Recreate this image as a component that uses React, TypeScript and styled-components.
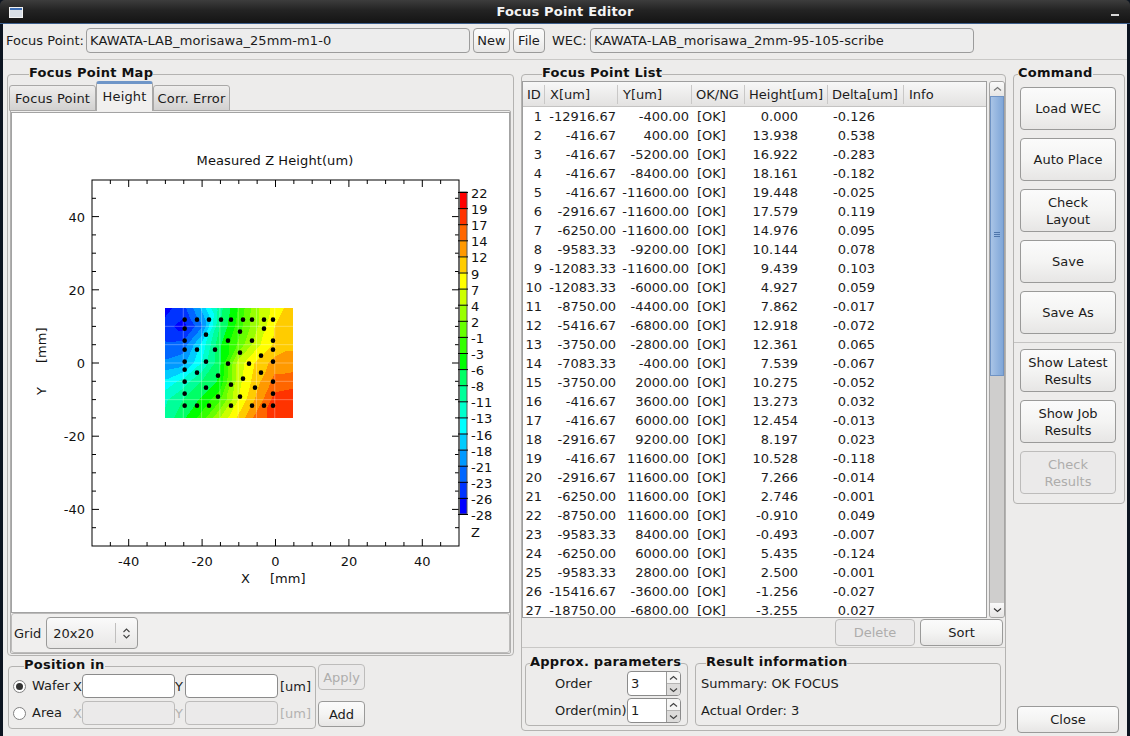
import styled, { createGlobalStyle } from "styled-components"

const GlobalStyle = createGlobalStyle`
  html, body {
    margin: 0;
    padding: 0;
    background: #10151c;
  }
  * {
    box-sizing: border-box;
  }
  body {
    font-family: "DejaVu Sans", "Liberation Sans", sans-serif;
    font-size: 13px;
    color: #1c1c1c;
  }
`

const Window = styled.div`
  width: 1130px;
  height: 736px;
  display: flex;
  flex-direction: column;
  overflow: hidden;
  background: #0c1420;
`

const TitleBar = styled.div`
  height: 24px;
  flex: none;
  position: relative;
  display: flex;
  align-items: center;
  justify-content: center;
  color: #f4f4f4;
  font-weight: bold;
  font-size: 13px;
  letter-spacing: 0.2px;
  border-radius: 5px 5px 0 0;
  background: linear-gradient(#3d3d3d, #232323 45%, #141414);
  border-bottom: 1px solid #3d5f8c;
`

const WindowIcon = styled.svg`
  position: absolute;
  left: 9px;
  top: 7px;
`

const MinimizeMark = styled.span`
  position: absolute;
  right: 11px;
  top: 14px;
  width: 8px;
  height: 2px;
  background: #d8d8d8;
`

const Body = styled.div`
  flex: 1;
  margin: 0 3px;
  background: #edeceb;
  display: flex;
  flex-direction: column;
  min-height: 0;
`

const TopRow = styled.div`
  height: 36px;
  flex: none;
  display: flex;
  align-items: center;
  padding: 0 0 2px 3px;
  border-bottom: 1px solid #c9c8c6;
`

const TopLabel = styled.span<{ $left?: number; $width: number }>`
  width: ${(p) => p.$width}px;
  margin-left: ${(p) => p.$left ?? 0}px;
  flex: none;
`

const PathField = styled.div`
  width: 384px;
  height: 25px;
  flex: none;
  display: flex;
  align-items: center;
  padding-left: 3px;
  letter-spacing: 0.1px;
  background: #ededed;
  border: 1px solid #9c9c9c;
  border-radius: 4px;
`

const Button = styled.div<{ $w?: number; $h?: number; $off?: boolean }>`
  width: ${(p) => (p.$w ? `${p.$w}px` : "100%")};
  height: ${(p) => p.$h ?? 43}px;
  flex: none;
  display: flex;
  align-items: center;
  justify-content: center;
  text-align: center;
  line-height: 17px;
  color: ${(p) => (p.$off ? "#aeadac" : "#1c1c1c")};
  background: ${(p) =>
    p.$off ? "#ebeaea" : "linear-gradient(#fbfbfb, #f4f4f3 50%, #e7e6e5)"};
  border: 1px solid ${(p) => (p.$off ? "#bdbcbb" : "#9a9a99")};
  border-radius: 4px;
`

const TopButton = styled(Button)`
  margin-left: 3px;
`

const Main = styled.div`
  flex: 1;
  min-height: 0;
  display: flex;
  padding: 6px 0 3px 4px;
`

const Column = styled.div<{ $w: number; $left?: number }>`
  width: ${(p) => p.$w}px;
  margin-left: ${(p) => p.$left ?? 0}px;
  flex: none;
  display: flex;
  flex-direction: column;
`

const Group = styled.fieldset<{ $h: number; $w?: number }>`
  margin: 0;
  padding: 0;
  min-width: 0;
  flex: none;
  width: ${(p) => (p.$w ? `${p.$w}px` : "100%")};
  height: ${(p) => p.$h}px;
  border: 1px solid #b4b3b1;
  border-radius: 4px;
`

const Legend = styled.legend<{ $left: number }>`
  margin-left: ${(p) => p.$left}px;
  padding: 0;
  height: 16px;
  line-height: 14px;
  font-weight: bold;
  font-size: 13px;
  letter-spacing: 0.25px;
  color: #111;
`

const TabStrip = styled.div`
  height: 30px;
  margin: -1px 0 0 1px;
  display: flex;
  align-items: flex-end;
  position: relative;
  z-index: 1;
`

const Tab = styled.div<{ $w: number; $active?: boolean }>`
  width: ${(p) => p.$w}px;
  height: ${(p) => (p.$active ? 30 : 26)}px;
  display: flex;
  align-items: center;
  justify-content: center;
  letter-spacing: 0.15px;
  padding-bottom: ${(p) => (p.$active ? 3 : 0)}px;
  background: ${(p) =>
    p.$active ? "#f1f0ef" : "linear-gradient(#efeeed, #d2d1d0)"};
  border: 1px solid #a9a8a7;
  border-bottom: ${(p) => (p.$active ? "none" : "1px solid #a9a8a7")};
  border-top: ${(p) => (p.$active ? "3px solid #6f96c8" : "1px solid #a9a8a7")};
  border-radius: 3px 3px 0 0;
`

const TabPane = styled.div`
  height: 544px;
  width: 501px;
  margin: -1px 0 0 2px;
  padding: 1px 0 0;
  border: 1px solid #b0afae;
  border-radius: 0 2px 2px 2px;
  display: flex;
  flex-direction: column;
  background: #f0efee;
`

const PlotFrame = styled.div`
  height: 501px;
  flex: none;
  background: #fff;
  border: 1px solid #a3a3a3;
`

const PlotSvg = styled.svg`
  display: block;
  font-family: "DejaVu Sans", sans-serif;
  font-size: 13px;
`

const GridBar = styled.div`
  height: 40px;
  flex: none;
  display: flex;
  align-items: center;
  padding-left: 2px;
  gap: 5px;
  border: 1px solid #bcbbba;
  border-radius: 3px;
`

const Combo = styled.div`
  width: 92px;
  height: 32px;
  display: flex;
  align-items: center;
  padding-left: 6px;
  background: linear-gradient(#fafafa, #e8e7e6);
  border: 1px solid #9a9a99;
  border-radius: 4px;
`

const ComboText = styled.span`
  flex: 1;
`

const ComboArrow = styled.div`
  width: 22px;
  height: 20px;
  display: flex;
  align-items: center;
  justify-content: center;
  border-left: 1px solid #c0bfbe;
`

const BottomRow = styled.div`
  margin: 2px 0 0 1px;
  display: flex;
  gap: 2px;
`

const FieldRow = styled.div`
  height: 24px;
  display: flex;
  align-items: center;
  padding-left: 4px;
`

const FieldRows = styled.div`
  display: flex;
  flex-direction: column;
  gap: 3px;
`

const Radio = styled.span<{ $on?: boolean }>`
  width: 13px;
  height: 13px;
  flex: none;
  display: flex;
  align-items: center;
  justify-content: center;
  border: 1px solid #808080;
  border-radius: 50%;
  background: #fff;

  &::after {
    content: "";
    width: 7px;
    height: 7px;
    border-radius: 50%;
    background: ${(p) => (p.$on ? "#333" : "transparent")};
  }
`

const RadioLabel = styled.span`
  width: 41px;
  margin-left: 6px;
  padding-bottom: 2px;
  flex: none;
`

const AxisLabel = styled.span<{ $off?: boolean; $w: number; $pad?: number }>`
  width: ${(p) => p.$w}px;
  padding-left: ${(p) => p.$pad ?? 0}px;
  flex: none;
  color: ${(p) => (p.$off ? "#b3b2b1" : "#1c1c1c")};
`

const NumberInput = styled.div<{ $off?: boolean }>`
  width: 93px;
  height: 24px;
  flex: none;
  background: ${(p) => (p.$off ? "#ebeaea" : "#fff")};
  border: 1px solid ${(p) => (p.$off ? "#bdbcbb" : "#8b8b8b")};
  border-radius: 4px;
`

const SideButtons = styled.div`
  width: 47px;
  padding-top: 6px;
  display: flex;
  flex-direction: column;
  gap: 11px;
`

const ListTop = styled.div`
  height: 537px;
  margin-top: -1px;
  display: flex;
  gap: 2px;
  flex: none;
`

const Table = styled.div`
  width: 465px;
  display: flex;
  flex-direction: column;
  overflow: hidden;
  background: #fff;
  border: 1px solid #9e9e9e;
`

const HeaderRow = styled.div`
  height: 25px;
  flex: none;
  display: flex;
  align-items: center;
  background: linear-gradient(#f7f7f7, #e3e2e1);
  border-bottom: 1px solid #c4c3c2;
`

const HeaderCell = styled.div<{ $w: number; $head: number; $last?: boolean }>`
  width: ${(p) => p.$w}px;
  height: 19px;
  flex: none;
  line-height: 19px;
  padding-left: ${(p) => p.$head}px;
  white-space: nowrap;
  overflow: hidden;
  border-right: ${(p) => (p.$last ? "none" : "1px solid #c9c8c7")};
`

const DataRow = styled.div`
  height: 19px;
  flex: none;
  display: flex;
  line-height: 19px;
`

const DataCell = styled.div<{ $w: number; $pad: number; $left?: boolean }>`
  width: ${(p) => p.$w}px;
  flex: none;
  white-space: nowrap;
  text-align: ${(p) => (p.$left ? "left" : "right")};
  padding-left: ${(p) => (p.$left ? p.$pad : 0)}px;
  padding-right: ${(p) => (p.$left ? 0 : p.$pad)}px;
`

const ScrollBar = styled.div`
  width: 16px;
  display: flex;
  flex-direction: column;
  background: #cfcecd;
  border: 1px solid #a5a4a3;
  border-radius: 3px;
  overflow: hidden;
`

const ScrollArrow = styled.div`
  height: 14px;
  flex: none;
  display: flex;
  align-items: center;
  justify-content: center;
  background: linear-gradient(#fafafa, #e6e5e4);
`

const ScrollThumb = styled.div`
  height: 280px;
  flex: none;
  display: flex;
  align-items: center;
  justify-content: center;
  padding-bottom: 3px;
  background: linear-gradient(90deg, #a9c4e6, #7fa6d8);
  border: 1px solid #6f93c4;
`

const ScrollTrack = styled.div`
  flex: 1;
`

const ListButtons = styled.div`
  height: 30px;
  flex: none;
  display: flex;
  justify-content: flex-end;
  align-items: center;
  gap: 5px;
  padding: 0 2px 1px 0;
  border-bottom: 1px solid #c9c8c6;
`

const ListBottom = styled.div`
  margin: 7px 0 0 3px;
  display: flex;
  gap: 7px;
`

const SpinRows = styled.div`
  display: flex;
  flex-direction: column;
  gap: 2px;
`

const SpinRow = styled.div`
  height: 25px;
  display: flex;
  align-items: center;
  padding-left: 29px;
`

const SpinLabel = styled.span`
  width: 72px;
  flex: none;
  white-space: nowrap;
`

const Spin = styled.div`
  width: 54px;
  height: 25px;
  flex: none;
  display: flex;
  background: #fff;
  border: 1px solid #8b8b8b;
  border-radius: 4px;
  overflow: hidden;
`

const SpinValue = styled.span`
  flex: 1;
  padding-left: 3px;
  line-height: 23px;
`

const SpinArrows = styled.div`
  width: 14px;
  flex: none;
  display: flex;
  flex-direction: column;
  border-left: 1px solid #9a9a99;
`

const SpinArrow = styled.div<{ $down?: boolean }>`
  flex: 1;
  display: flex;
  align-items: center;
  justify-content: center;
  background: ${(p) => (p.$down ? "#dcdbda" : "#f6f6f5")};
  border-top: ${(p) => (p.$down ? "1px solid #b5b4b3" : "none")};
`

const ResultLines = styled.div`
  display: flex;
  flex-direction: column;
  padding: 4px 0 0 5px;
  gap: 10px;
  line-height: 17px;
`

const CommandList = styled.div`
  padding: 5px 8px 0 6px;
  display: flex;
  flex-direction: column;
  gap: 8px;
`

const CommandSep = styled.div`
  height: 1px;
  margin: 0 -6px -2px;
  background: #c4c3c2;
`

const CloseButton = styled(Button)`
  margin: auto 0 0 4px;
`

// palette of the colour bar, from top (22) to bottom (-28)
const bands = [
  "#ff0000", "#ff3300", "#ff6600", "#ff9900", "#ffcc00",
  "#ffff00", "#ccff00", "#99ff00", "#66ff00", "#33ff00",
  "#00ff00", "#00ff66", "#00ff99", "#00ffcc", "#00ffff",
  "#00ccff", "#0099ff", "#0066ff", "#0033ff", "#0000ff",
]
const barLabels = [
  "22", "19", "17", "14", "12", "9", "7", "4", "2", "-1", "-3",
  "-6", "-8", "-11", "-13", "-16", "-18", "-21", "-23", "-26", "-28",
]

// measured height on the 5 mm grid, rows from y=15 to y=-15, x=-30 to x=5
const field = [
  [-26.5, -24, -17.5, -9, -3, 4, 8, 11],
  [-24.5, -26.6, -21, -8, -2, 4, 9.5, 11.5],
  [-22.5, -22, -15, -6, 0, 6, 10, 11.5],
  [-20, -19, -13, -6, 5.5, 10, 13, 13],
  [-15, -12, -8, -5, 6, 11, 15.5, 16],
  [-11, -8, -5, -1, 7, 12.5, 18, 18.5],
  [-10, -6, -2, 4.5, 10, 15.5, 18, 18],
]

const zoneX = 165
const zoneY = 308
const zoneW = 128
const zoneH = 110

function heightAt(px: number, py: number) {
  const gx = Math.min((px / zoneW) * 7, 6.999)
  const gy = Math.min((py / zoneH) * 6, 5.999)
  const i = Math.floor(gx)
  const j = Math.floor(gy)
  const fx = gx - i
  const fy = gy - j
  const a = field[j][i]
  const b = field[j][i + 1]
  const c = field[j + 1][i]
  const d = field[j + 1][i + 1]
  if (fx + fy < 1) return a + fx * (b - a) + fy * (c - a)
  return d + (1 - fx) * (c - d) + (1 - fy) * (b - d)
}

function bandOf(v: number) {
  const idx = Math.floor((22 - v) / 2.5)
  return Math.max(0, Math.min(bands.length - 1, idx))
}

type Run = { x: number; y: number; w: number; color: string }

function contourRuns() {
  const runs: Run[] = []
  for (let y = 0; y < zoneH; y++) {
    let start = 0
    let cur = bandOf(heightAt(0.5, y + 0.5))
    for (let x = 1; x <= zoneW; x++) {
      const next = x < zoneW ? bandOf(heightAt(x + 0.5, y + 0.5)) : -1
      if (next !== cur) {
        runs.push({ x: zoneX + start, y: zoneY + y, w: x - start, color: bands[cur] })
        start = x
        cur = next
      }
    }
  }
  return runs
}

const runs = contourRuns()

const dots = [
  [104, 74], [141, 74], [177, 74], [213, 74], [243, 74], [279, 74], [306, 74], [342, 74], [369, 74],
  [104, 101], [342, 101], [270, 110], [168, 119],
  [104, 137], [234, 137], [306, 137], [369, 137],
  [104, 164], [141, 164], [195, 164], [369, 164], [270, 173], [333, 182],
  [104, 200], [168, 200], [234, 206], [297, 206], [369, 200],
  [104, 224], [141, 233], [333, 233], [204, 242], [279, 251], [104, 260], [369, 260],
  [243, 269], [168, 278], [315, 278], [104, 296], [369, 296], [204, 305], [270, 305],
  [104, 332], [141, 332], [177, 332], [243, 332], [306, 332], [342, 332], [369, 332],
]

const xMajor = [-40, -20, 0, 20, 40]
const toX = (v: number) => 275.5 + v * 3.67
const toY = (v: number) => 363 - v * 3.66
const minorTicks = Array.from({ length: 19 }, (_, i) => -45 + i * 5)

function HeightPlot() {
  return (
    <PlotSvg width={497} height={499} viewBox="12 113 497 499">
      <text x={275} y={165} textAnchor="middle" fill="#111" letterSpacing="0.1">
        Measured Z Height(um)
      </text>
      <rect x={92} y={180} width={367} height={366} fill="#fff" />
      {runs.map((r, i) => (
        <rect key={i} x={r.x} y={r.y} width={r.w} height={1} fill={r.color} shapeRendering="crispEdges" />
      ))}
      {[1, 2, 3, 4, 5, 6].map((i) => (
        <line key={i} x1={zoneX + i * 18.29} x2={zoneX + i * 18.29} y1={zoneY} y2={zoneY + zoneH} stroke="#fff" strokeOpacity="0.3" />
      ))}
      {[1, 2, 3, 4, 5].map((i) => (
        <line key={i} x1={zoneX} x2={zoneX + zoneW} y1={zoneY + i * 18.33} y2={zoneY + i * 18.33} stroke="#fff" strokeOpacity="0.3" />
      ))}
      {dots.map(([x, y], i) => (
        <circle key={i} cx={150 + x / 3} cy={295 + y / 3} r={2.3} fill="#000" />
      ))}
      <rect x={92} y={180} width={367} height={366} fill="none" stroke="#000" />
      {minorTicks.map((v) => {
        const len = v % 20 === 0 ? 7 : 4
        return (
          <g key={v} stroke="#000">
            <line x1={toX(v)} x2={toX(v)} y1={180} y2={180 + len} />
            <line x1={toX(v)} x2={toX(v)} y1={546} y2={546 - len} />
            <line x1={92} x2={92 + len} y1={toY(v)} y2={toY(v)} />
            <line x1={459} x2={459 - len} y1={toY(v)} y2={toY(v)} />
          </g>
        )
      })}
      {xMajor.map((v) => (
        <text key={v} x={toX(v)} y={566} textAnchor="middle" fill="#111">
          {v}
        </text>
      ))}
      {xMajor.map((v) => (
        <text key={v} x={85} y={toY(v) + 5} textAnchor="end" fill="#111">
          {v}
        </text>
      ))}
      <text x={241} y={583} fill="#111">X</text>
      <text x={270} y={583} fill="#111">[mm]</text>
      <text transform="translate(46 395) rotate(-90)" fill="#111">Y</text>
      <text transform="translate(46 363) rotate(-90)" fill="#111">[mm]</text>

      {bands.map((c, i) => (
        <rect key={c} x={460} y={192 + i * 16.1} width={7} height={16.2} fill={c} />
      ))}
      <rect x={459} y={192} width={8} height={322} fill="none" stroke="#555" strokeWidth="1" />
      {barLabels.map((t, i) => (
        <g key={t}>
          <line x1={458} x2={468} y1={192.5 + i * 16.1} y2={192.5 + i * 16.1} stroke="#000" />
          <text x={471} y={198 + i * 16.1} fill="#111">{t}</text>
        </g>
      ))}
      <text x={471} y={537} fill="#111">Z</text>
    </PlotSvg>
  )
}

const columns = [
  { title: "ID", w: 22, pad: 3, head: 4 },
  { title: "X[um]", w: 73, pad: 2, head: 5 },
  { title: "Y[um]", w: 74, pad: 3, head: 5 },
  { title: "OK/NG", w: 53, pad: 5, head: 4, left: true },
  { title: "Height[um]", w: 83, pad: 30, head: 4 },
  { title: "Delta[um]", w: 76, pad: 29, head: 4 },
  { title: "Info", w: 81, pad: 4, head: 5, left: true },
]

const points = [
  ["-12916.67", "-400.00", "0.000", "-0.126"],
  ["-416.67", "400.00", "13.938", "0.538"],
  ["-416.67", "-5200.00", "16.922", "-0.283"],
  ["-416.67", "-8400.00", "18.161", "-0.182"],
  ["-416.67", "-11600.00", "19.448", "-0.025"],
  ["-2916.67", "-11600.00", "17.579", "0.119"],
  ["-6250.00", "-11600.00", "14.976", "0.095"],
  ["-9583.33", "-9200.00", "10.144", "0.078"],
  ["-12083.33", "-11600.00", "9.439", "0.103"],
  ["-12083.33", "-6000.00", "4.927", "0.059"],
  ["-8750.00", "-4400.00", "7.862", "-0.017"],
  ["-5416.67", "-6800.00", "12.918", "-0.072"],
  ["-3750.00", "-2800.00", "12.361", "0.065"],
  ["-7083.33", "-400.00", "7.539", "-0.067"],
  ["-3750.00", "2000.00", "10.275", "-0.052"],
  ["-416.67", "3600.00", "13.273", "0.032"],
  ["-416.67", "6000.00", "12.454", "-0.013"],
  ["-2916.67", "9200.00", "8.197", "0.023"],
  ["-416.67", "11600.00", "10.528", "-0.118"],
  ["-2916.67", "11600.00", "7.266", "-0.014"],
  ["-6250.00", "11600.00", "2.746", "-0.001"],
  ["-8750.00", "11600.00", "-0.910", "0.049"],
  ["-9583.33", "8400.00", "-0.493", "-0.007"],
  ["-6250.00", "6000.00", "5.435", "-0.124"],
  ["-9583.33", "2800.00", "2.500", "-0.001"],
  ["-15416.67", "-3600.00", "-1.256", "-0.027"],
  ["-18750.00", "-6800.00", "-3.255", "0.027"],
]

function Chevron({ down, color = "#444" }: { down?: boolean; color?: string }) {
  return (
    <svg width="9" height="6" viewBox="0 0 9 6">
      <path d={down ? "M1 1.5 L4.5 4.5 L8 1.5" : "M1 4.5 L4.5 1.5 L8 4.5"} fill="none" stroke={color} strokeWidth="1.2" />
    </svg>
  )
}

function SpinBox({ label, value }: { label: string; value: string }) {
  return (
    <SpinRow>
      <SpinLabel>{label}</SpinLabel>
      <Spin>
        <SpinValue>{value}</SpinValue>
        <SpinArrows>
          <SpinArrow><Chevron /></SpinArrow>
          <SpinArrow $down><Chevron down /></SpinArrow>
        </SpinArrows>
      </Spin>
    </SpinRow>
  )
}

function App() {
  return (
    <Window>
      <GlobalStyle />
      <TitleBar>
        <WindowIcon width="14" height="11" viewBox="0 0 14 11">
          <rect x="0.5" y="0.5" width="13" height="10" fill="#d9dfe6" stroke="#f2f2f2" />
          <rect x="1" y="1" width="12" height="2" fill="#3f6fb5" />
        </WindowIcon>
        Focus Point Editor
        <MinimizeMark />
      </TitleBar>
      <Body>
        <TopRow>
          <TopLabel $width={80}>Focus Point:</TopLabel>
          <PathField>KAWATA-LAB_morisawa_25mm-m1-0</PathField>
          <TopButton $w={37} $h={25}>New</TopButton>
          <TopButton $w={32} $h={25}>File</TopButton>
          <TopLabel $left={7} $width={38}>WEC:</TopLabel>
          <PathField>KAWATA-LAB_morisawa_2mm-95-105-scribe</PathField>
        </TopRow>
        <Main>
          <Column $w={507}>
            <Group $h={590}>
              <Legend $left={21}>Focus Point Map</Legend>
              <TabStrip>
                <Tab $w={87}>Focus Point</Tab>
                <Tab $w={57} $active>Height</Tab>
                <Tab $w={77}>Corr. Error</Tab>
              </TabStrip>
              <TabPane>
                <PlotFrame>
                  <HeightPlot />
                </PlotFrame>
                <GridBar>
                  Grid
                  <Combo>
                    <ComboText>20x20</ComboText>
                    <ComboArrow>
                      <svg width="9" height="13" viewBox="0 0 9 13">
                        <path d="M1.5 5 L4.5 2 L7.5 5 M1.5 8 L4.5 11 L7.5 8" fill="none" stroke="#444" strokeWidth="1.1" />
                      </svg>
                    </ComboArrow>
                  </Combo>
                </GridBar>
              </TabPane>
            </Group>
            <BottomRow>
              <Group $h={71} $w={308}>
                <Legend $left={15}>Position in</Legend>
                <FieldRows>
                  <FieldRow>
                    <Radio $on />
                    <RadioLabel>Wafer</RadioLabel>
                    <AxisLabel $w={9}>X</AxisLabel>
                    <NumberInput />
                    <AxisLabel $w={10}>Y</AxisLabel>
                    <NumberInput />
                    <AxisLabel $w={32} $pad={2}>[um]</AxisLabel>
                  </FieldRow>
                  <FieldRow>
                    <Radio />
                    <RadioLabel>Area</RadioLabel>
                    <AxisLabel $w={9} $off>X</AxisLabel>
                    <NumberInput $off />
                    <AxisLabel $w={10} $off>Y</AxisLabel>
                    <NumberInput $off />
                    <AxisLabel $w={32} $pad={2} $off>[um]</AxisLabel>
                  </FieldRow>
                </FieldRows>
              </Group>
              <SideButtons>
                <Button $h={26} $off>Apply</Button>
                <Button $h={26}>Add</Button>
              </SideButtons>
            </BottomRow>
          </Column>
          <Column $w={485} $left={7}>
            <Group $h={665}>
              <Legend $left={20}>Focus Point List</Legend>
              <ListTop>
                <Table>
                  <HeaderRow>
                    {columns.map((c, i) => (
                      <HeaderCell key={c.title} $w={c.w} $head={c.head} $last={i === columns.length - 1}>
                        {c.title}
                      </HeaderCell>
                    ))}
                  </HeaderRow>
                  {points.map((p, i) => {
                    const cells = [String(i + 1), p[0], p[1], "[OK]", p[2], p[3], ""]
                    return (
                      <DataRow key={i}>
                        {cells.map((text, k) => (
                          <DataCell key={k} $w={columns[k].w} $pad={columns[k].pad} $left={columns[k].left}>
                            {text}
                          </DataCell>
                        ))}
                      </DataRow>
                    )
                  })}
                </Table>
                <ScrollBar>
                  <ScrollArrow><Chevron color="#777" /></ScrollArrow>
                  <ScrollThumb>
                    <svg width="6" height="6" viewBox="0 0 6 6">
                      <path d="M0 0.5 H6 M0 2.5 H6 M0 4.5 H6" stroke="#4f76ab" />
                    </svg>
                  </ScrollThumb>
                  <ScrollTrack />
                  <ScrollArrow><Chevron down color="#333" /></ScrollArrow>
                </ScrollBar>
              </ListTop>
              <ListButtons>
                <Button $w={80} $h={27} $off>Delete</Button>
                <Button $w={83} $h={27}>Sort</Button>
              </ListButtons>
              <ListBottom>
                <Group $h={71} $w={163}>
                  <Legend $left={4}>Approx. parameters</Legend>
                  <SpinRows>
                    <SpinBox label="Order" value="3" />
                    <SpinBox label="Order(min)" value="1" />
                  </SpinRows>
                </Group>
                <Group $h={71} $w={306}>
                  <Legend $left={10}>Result information</Legend>
                  <ResultLines>
                    <span>Summary: OK FOCUS</span>
                    <span>Actual Order: 3</span>
                  </ResultLines>
                </Group>
              </ListBottom>
            </Group>
          </Column>
          <Column $w={112} $left={7}>
            <Group $h={438}>
              <Legend $left={4}>Command</Legend>
              <CommandList>
                <Button>Load WEC</Button>
                <Button>Auto Place</Button>
                <Button>Check<br />Layout</Button>
                <Button>Save</Button>
                <Button>Save As</Button>
                <CommandSep />
                <Button>Show Latest<br />Results</Button>
                <Button>Show Job<br />Results</Button>
                <Button $off>Check<br />Results</Button>
              </CommandList>
            </Group>
            <CloseButton $w={102} $h={27}>Close</CloseButton>
          </Column>
        </Main>
      </Body>
    </Window>
  )
}

export default App
